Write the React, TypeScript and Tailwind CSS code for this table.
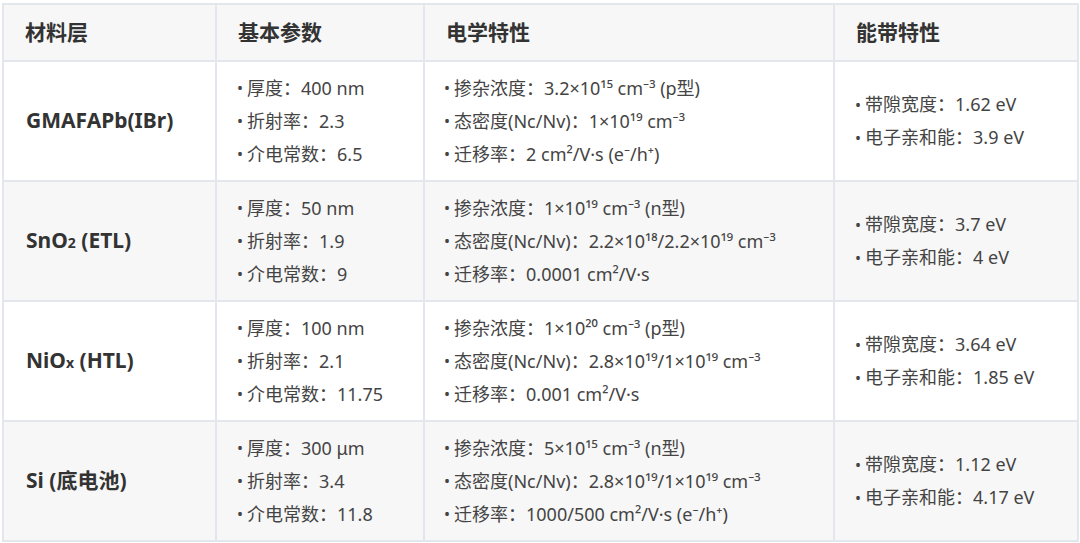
import React from "react";

type Row = {
  name: React.ReactNode;
  basic: string[];
  elec: string[];
  band: string[];
};

const rows: Row[] = [
  {
    name: "GMAFAPb(IBr)",
    basic: ["厚度：400 nm", "折射率：2.3", "介电常数：6.5"],
    elec: ["掺杂浓度：3.2×10¹⁵ cm⁻³ (p型)", "态密度(Nc/Nv)：1×10¹⁹ cm⁻³", "迁移率：2 cm²/V·s (e⁻/h⁺)"],
    band: ["带隙宽度：1.62 eV", "电子亲和能：3.9 eV"],
  },
  {
    name: (
      <>
        SnO<span className="text-[14px]">2</span> (ETL)
      </>
    ),
    basic: ["厚度：50 nm", "折射率：1.9", "介电常数：9"],
    elec: ["掺杂浓度：1×10¹⁹ cm⁻³ (n型)", "态密度(Nc/Nv)：2.2×10¹⁸/2.2×10¹⁹ cm⁻³", "迁移率：0.0001 cm²/V·s"],
    band: ["带隙宽度：3.7 eV", "电子亲和能：4 eV"],
  },
  {
    name: (
      <>
        NiO<span className="text-[14px]">x</span> (HTL)
      </>
    ),
    basic: ["厚度：100 nm", "折射率：2.1", "介电常数：11.75"],
    elec: ["掺杂浓度：1×10²⁰ cm⁻³ (p型)", "态密度(Nc/Nv)：2.8×10¹⁹/1×10¹⁹ cm⁻³", "迁移率：0.001 cm²/V·s"],
    band: ["带隙宽度：3.64 eV", "电子亲和能：1.85 eV"],
  },
  {
    name: "Si (底电池)",
    basic: ["厚度：300 μm", "折射率：3.4", "介电常数：11.8"],
    elec: ["掺杂浓度：5×10¹⁵ cm⁻³ (n型)", "态密度(Nc/Nv)：2.8×10¹⁹/1×10¹⁹ cm⁻³", "迁移率：1000/500 cm²/V·s (e⁻/h⁺)"],
    band: ["带隙宽度：1.12 eV", "电子亲和能：4.17 eV"],
  },
];

function Items({ list }: { list: string[] }) {
  return (
    <div className="flex flex-col">
      {list.map((t, i) => (
        <div key={i} className="flex items-center h-[33px] whitespace-nowrap">
          <span className="text-[16px] mr-[4px]">•</span>
          <span>{t}</span>
        </div>
      ))}
    </div>
  );
}

export default function App() {
  const font = { fontFamily: '"Noto Sans", "Noto Sans CJK SC", sans-serif' };
  return (
    <div className="w-[1080px] h-[543px] bg-white pt-[3px] pl-[2px]" style={font}>
      <table className="border-collapse w-[1075px] table-fixed">
        <colgroup>
          <col className="w-[213px]" />
          <col className="w-[208px]" />
          <col className="w-[410px]" />
          <col className="w-[244px]" />
        </colgroup>
        <thead>
          <tr className="bg-[#f7f7f7] h-[57px]">
            {["材料层", "基本参数", "电学特性", "能带特性"].map((h) => (
              <th
                key={h}
                className="border-2 border-[#e3e6ea] text-left px-[21px] text-[21px] font-bold text-[#333]"
              >
                {h}
              </th>
            ))}
          </tr>
        </thead>
        <tbody>
          {rows.map((r, i) => (
            <tr key={i} className={`h-[120px] ${i % 2 === 1 ? "bg-[#f7f7f7]" : "bg-white"}`}>
              <td className="border-2 border-[#e3e6ea] px-[22px] text-[21px] font-bold text-[#333] whitespace-nowrap">
                {r.name}
              </td>
              <td className="border-2 border-[#e3e6ea] pl-[20px] text-[18px] text-[#444]">
                <Items list={r.basic} />
              </td>
              <td className="border-2 border-[#e3e6ea] pl-[19px] text-[18px] text-[#444]">
                <Items list={r.elec} />
              </td>
              <td className="border-2 border-[#e3e6ea] pl-[20px] text-[18px] text-[#444]">
                <Items list={r.band} />
              </td>
            </tr>
          ))}
        </tbody>
      </table>
    </div>
  );
}
